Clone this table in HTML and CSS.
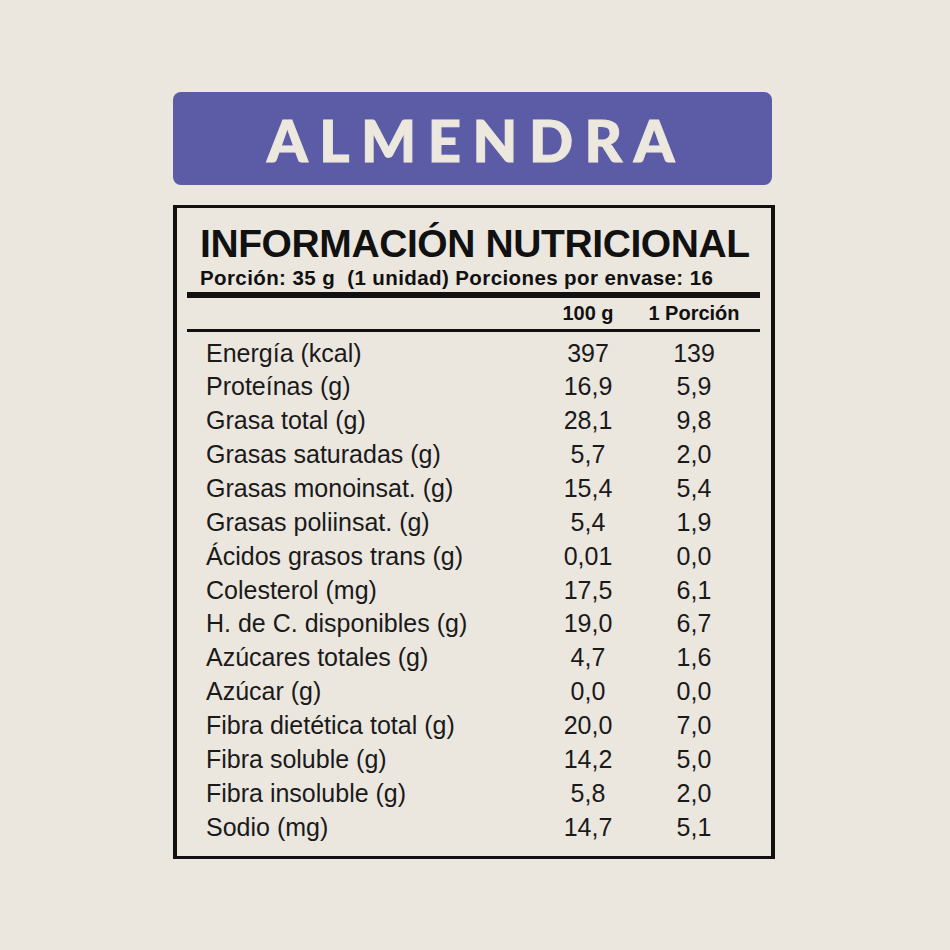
FILE: index.html
```html
<!DOCTYPE html>
<html lang="es">
<head>
<meta charset="utf-8">
<title>Almendra - Información nutricional</title>
<link rel="stylesheet" href="styles.css">
</head>
<body>
<main class="page">
  <header class="flavor">ALMENDRA</header>
  <section class="label">
    <h1 class="title">INFORMACIÓN NUTRICIONAL</h1>
    <p class="serving">Porción: 35 g&nbsp; (1 unidad) Porciones por envase: 16</p>
    <div class="rule-thick"></div>
    <div class="grid head">
      <span></span><span class="num">100 g</span><span class="num">1 Porción</span>
    </div>
    <div class="rule-thin"></div>
    <div class="grid rows">
      <span class="name">Energía (kcal)</span><span class="num">397</span><span class="num">139</span>
      <span class="name">Proteínas (g)</span><span class="num">16,9</span><span class="num">5,9</span>
      <span class="name">Grasa total (g)</span><span class="num">28,1</span><span class="num">9,8</span>
      <span class="name">Grasas saturadas (g)</span><span class="num">5,7</span><span class="num">2,0</span>
      <span class="name">Grasas monoinsat. (g)</span><span class="num">15,4</span><span class="num">5,4</span>
      <span class="name">Grasas poliinsat. (g)</span><span class="num">5,4</span><span class="num">1,9</span>
      <span class="name">Ácidos grasos trans (g)</span><span class="num">0,01</span><span class="num">0,0</span>
      <span class="name">Colesterol (mg)</span><span class="num">17,5</span><span class="num">6,1</span>
      <span class="name">H. de C. disponibles (g)</span><span class="num">19,0</span><span class="num">6,7</span>
      <span class="name">Azúcares totales (g)</span><span class="num">4,7</span><span class="num">1,6</span>
      <span class="name">Azúcar (g)</span><span class="num">0,0</span><span class="num">0,0</span>
      <span class="name">Fibra dietética total (g)</span><span class="num">20,0</span><span class="num">7,0</span>
      <span class="name">Fibra soluble (g)</span><span class="num">14,2</span><span class="num">5,0</span>
      <span class="name">Fibra insoluble (g)</span><span class="num">5,8</span><span class="num">2,0</span>
      <span class="name">Sodio (mg)</span><span class="num">14,7</span><span class="num">5,1</span>
    </div>
  </section>
</main>
</body>
</html>
```
FILE: styles.css
```css
html, body {
  margin: 0;
  padding: 0;
  background: #ebe7df;
}
body {
  font-family: "Liberation Sans", Arial, sans-serif;
  color: #141414;
}
.page {
  width: 602px;
  margin-left: 173px;
  padding-top: 92px;
  display: flex;
  flex-direction: column;
  gap: 20px;
}
.flavor {
  width: 599px;
  height: 93px;
  box-sizing: border-box;
  background: #5c5ba6;
  border-radius: 8px;
  color: #ece8de;
  font-family: "Lato", "Inter", sans-serif;
  font-weight: 900;
  font-size: 58px;
  letter-spacing: 11.5px;
  padding-left: 8px;
  padding-top: 2px;
  display: flex;
  align-items: center;
  justify-content: center;
  line-height: 1;
  -webkit-text-stroke: 1px #ece8de;
}
.label {
  border: 3px solid #111;
  border-left-width: 4px;
  border-right-width: 4px;
  padding: 16px 11px 12px 10px;
  display: flex;
  flex-direction: column;
}
.title {
  margin: 0 0 0 13px;
  font-size: 39px;
  font-weight: 700;
  line-height: 1;
  letter-spacing: -0.4px;
  color: #111;
}
.serving {
  margin: 5px 0 0 13px;
  font-size: 20.5px;
  font-weight: 700;
  line-height: 1;
  letter-spacing: 0.4px;
  color: #111;
}
.rule-thick {
  height: 6px;
  background: #111;
  margin-top: 3px;
}
.rule-thin {
  height: 3px;
  background: #111;
}
.grid {
  display: grid;
  grid-template-columns: 1fr 80px 132px;
}
.head {
  font-size: 20px;
  font-weight: 700;
  line-height: 31px;
  color: #111;
}
.rows {
  padding-top: 5px;
  font-size: 25px;
  line-height: 33.86px;
  color: #1a1a1a;
}
.name {
  padding-left: 19px;
}
.num {
  text-align: center;
}
```
